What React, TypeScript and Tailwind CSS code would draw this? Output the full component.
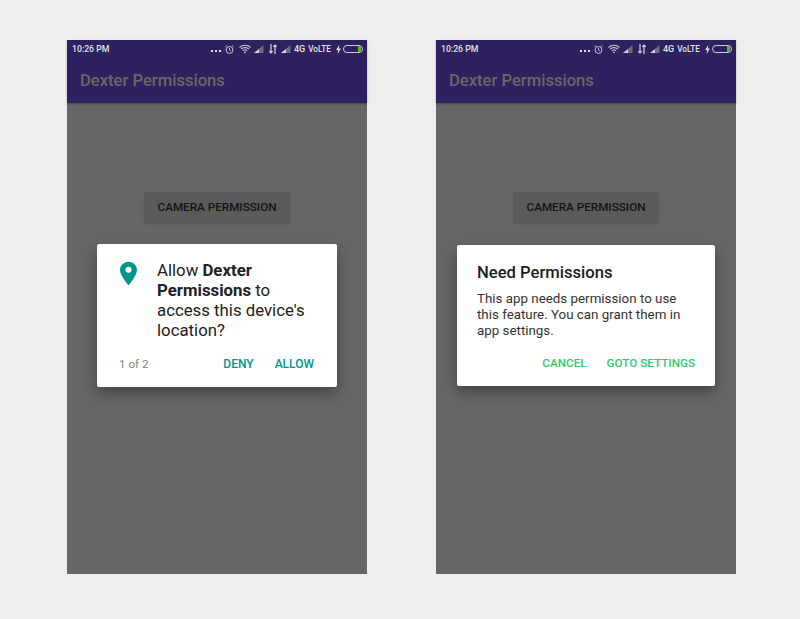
const StatusIcons = () => (
  <div className="flex items-center text-[9px] font-medium text-[#e4e2ea]">
    <div className="mr-[4px] mt-[4px] flex gap-[2px]">
      <span className="size-[2px] bg-[#e4e2ea]" />
      <span className="size-[2px] bg-[#e4e2ea]" />
      <span className="size-[2px] bg-[#e4e2ea]" />
    </div>
    <svg width="9" height="11" viewBox="0 0 10 11" fill="none" stroke="#d8d6de" strokeWidth="1" className="mr-[5px]">
      <circle cx="5" cy="6" r="3.8" />
      <path d="M5 3.8V6L6.5 7M0.6 2.5 2.3 1M9.4 2.5 7.7 1" />
    </svg>
    <svg width="12" height="10" viewBox="0 0 12 10" fill="none" stroke="#cfccd6" strokeWidth="1.1" className="mr-[3px]">
      <path d="M0.5 3.5C3.5 0.5 8.5 0.5 11.5 3.5M2.2 5C4 3.2 8 3.2 9.8 5M3.8 6.6C4.8 5.7 7.2 5.7 8.2 6.6" />
      <path d="M6 9.5 4.8 8C5.5 7.5 6.5 7.5 7.2 8Z" fill="#cfccd6" stroke="none" />
    </svg>
    <svg width="10" height="8" viewBox="0 0 10 8" className="mr-[5px]">
      <path d="M9.5 0V8H0Z" fill="#6f6a80" />
      <path d="M5 4.2V8H0Z" fill="#d8d6de" />
    </svg>
    <svg width="8" height="10" viewBox="0 0 8 10" fill="none" stroke="#d8d6de" strokeWidth="1.2" className="mr-[4px]">
      <path d="M2 0V9M0.3 7.2 2 9 3.7 7.2M6 10V1M4.3 2.8 6 1 7.7 2.8" />
    </svg>
    <svg width="10" height="8" viewBox="0 0 10 8" className="mr-[3px]">
      <path d="M9.5 0V8H0Z" fill="#6f6a80" />
      <path d="M5 4.2V8H0Z" fill="#d8d6de" />
    </svg>
    <span className="mr-[3px] leading-none">4G</span>
    <span className="mr-[5px] text-[8.2px] leading-none">VoLTE</span>
    <svg width="5" height="9" viewBox="0 0 5 9" fill="#d8d6de" className="mr-[2px]">
      <path d="M3.2 0 0 5h2L1.6 9 5 3.6H3Z" />
    </svg>
    <div className="flex h-[8px] w-[20px] justify-end overflow-hidden rounded-full border border-[#cfccd6] pr-[1px]">
      <div className="w-[3px] bg-[#5cb531]" />
    </div>
  </div>
);

const PhoneFrame = ({ children }: { children: React.ReactNode }) => (
  <div className="relative flex h-[534px] w-[300px] flex-col bg-[#666666]">
    <div className="h-[63px] shrink-0 bg-[#2f205f] shadow-[0_1px_2px_rgba(0,0,0,0.3)]">
      <div className="flex h-[17px] items-center justify-between pl-[5px] pr-[4px] pt-[1px]">
        <span className="text-[8.7px] font-medium leading-none text-[#e4e2ea]">10:26 PM</span>
        <StatusIcons />
      </div>
      <h1 className="mt-[12px] pl-[13px] text-[16.6px] font-medium leading-[24px] text-[#686868]">
        Dexter Permissions
      </h1>
    </div>

    <div className="flex justify-center pt-[89px]">
      <button className="flex h-[31px] w-[146px] items-center justify-center rounded-[2px] bg-[#5a5a5a] text-[11.7px] font-medium text-[#141414] shadow-[0_1px_2px_rgba(0,0,0,0.15)]">
        CAMERA PERMISSION
      </button>
    </div>

    {children}
  </div>
);

export default function App() {
  return (
    <div className="flex h-[619px] w-[800px] gap-[69px] bg-[#eeeeee] pl-[67px] pt-[40px] font-['Roboto',sans-serif]">
      <PhoneFrame>
        <div className="absolute left-[30px] top-[204px] h-[143px] w-[240px] rounded-[2px] bg-white pl-[23px] pr-[23px] pt-[17px] shadow-[0_6px_14px_rgba(0,0,0,0.35)]">
          <div className="flex">
            <svg width="17" height="25" viewBox="0 0 18 25" className="shrink-0">
              <path
                fillRule="evenodd"
                d="M9 0C4 0 0 3.9 0 8.9 0 15 9 25 9 25s9-10 9-16.1C18 3.9 14 0 9 0Zm0 5.3a3.2 3.2 0 1 1 0 6.4 3.2 3.2 0 0 1 0-6.4Z"
                fill="#009688"
              />
            </svg>
            <p className="ml-[20px] -mt-[1px] text-[16.8px] leading-[20px] text-[#212121]">
              Allow <b className="font-bold">Dexter Permissions</b> to access this device's location?
            </p>
          </div>
          <div className="-ml-[1px] mt-[16px] flex items-center text-[12px] font-medium leading-[16px]">
            <span className="text-[11.6px] font-normal text-[#858585]">1 of 2</span>
            <button className="ml-auto text-[#009688]">DENY</button>
            <button className="ml-[21px] text-[#009688]">ALLOW</button>
          </div>
        </div>
      </PhoneFrame>

      <PhoneFrame>
        <div className="absolute left-[21px] top-[205px] h-[141px] w-[258px] rounded-[2px] bg-white px-[20px] pt-[18px] shadow-[0_6px_14px_rgba(0,0,0,0.35)]">
          <h2 className="text-[16.6px] font-medium leading-[20px] text-[#1c1c1c]">Need Permissions</h2>
          <p className="mt-[8px] text-[13.35px] leading-[16px] text-[#333333]">
            This app needs permission to use this feature. You can grant them in app settings.
          </p>
          <div className="mt-[16px] flex justify-end gap-[20px] text-[11.7px] font-medium leading-[16px] text-[#2ecc71]">
            <button>CANCEL</button>
            <button>GOTO SETTINGS</button>
          </div>
        </div>
      </PhoneFrame>
    </div>
  );
}
